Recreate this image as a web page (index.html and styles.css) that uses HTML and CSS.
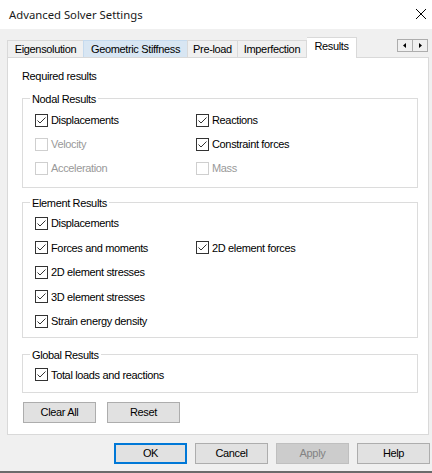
FILE: index.html
```html
<!DOCTYPE html>
<html>
<head>
<meta charset="utf-8">
<link rel="stylesheet" href="styles.css">
</head>
<body>
<div class="window">
  <div class="titlebar">
    <span class="title">Advanced Solver Settings</span>
    <svg class="close" width="12" height="12" viewBox="0 0 12 12"><path d="M1 1 L11 11 M11 1 L1 11" stroke="#000" stroke-width="1" fill="none"/></svg>
  </div>
  <div class="body">
    <div class="tabstrip">
      <div class="tab t1">Eigensolution</div>
      <div class="tab t2 hover">Geometric Stiffness</div>
      <div class="tab t3">Pre-load</div>
      <div class="tab t4">Imperfection</div>
      <div class="tab t5 active">Results</div>
      <div class="scroller">
        <div class="sbtn"><svg width="14" height="11" viewBox="0 0 14 11"><path d="M8 3 L5 5.5 L8 8 Z" fill="#000"/></svg></div>
        <div class="sbtn"><svg width="14" height="11" viewBox="0 0 14 11"><path d="M6 3 L9 5.5 L6 8 Z" fill="#000"/></svg></div>
      </div>
    </div>
    <div class="panel">
      <div class="req">Required results</div>

      <div class="group g-nodal">
        <div class="gtitle">Nodal Results</div>
        <div class="grid">
          <label class="cb"><span class="box"><svg viewBox="0 0 11 11"><path d="M1.5 5.5 L4 8 L9.5 2.5"/></svg></span>Displacements</label>
          <label class="cb"><span class="box"><svg viewBox="0 0 11 11"><path d="M1.5 5.5 L4 8 L9.5 2.5"/></svg></span>Reactions</label>
          <label class="cb dis"><span class="box"></span>Velocity</label>
          <label class="cb"><span class="box"><svg viewBox="0 0 11 11"><path d="M1.5 5.5 L4 8 L9.5 2.5"/></svg></span>Constraint forces</label>
          <label class="cb dis"><span class="box"></span>Acceleration</label>
          <label class="cb dis"><span class="box"></span>Mass</label>
        </div>
      </div>

      <div class="group g-elem">
        <div class="gtitle">Element Results</div>
        <div class="grid elem">
          <label class="cb"><span class="box"><svg viewBox="0 0 11 11"><path d="M1.5 5.5 L4 8 L9.5 2.5"/></svg></span>Displacements</label>
          <span></span>
          <label class="cb"><span class="box"><svg viewBox="0 0 11 11"><path d="M1.5 5.5 L4 8 L9.5 2.5"/></svg></span>Forces and moments</label>
          <label class="cb"><span class="box"><svg viewBox="0 0 11 11"><path d="M1.5 5.5 L4 8 L9.5 2.5"/></svg></span>2D element forces</label>
          <label class="cb"><span class="box"><svg viewBox="0 0 11 11"><path d="M1.5 5.5 L4 8 L9.5 2.5"/></svg></span>2D element stresses</label>
          <span></span>
          <label class="cb"><span class="box"><svg viewBox="0 0 11 11"><path d="M1.5 5.5 L4 8 L9.5 2.5"/></svg></span>3D element stresses</label>
          <span></span>
          <label class="cb"><span class="box"><svg viewBox="0 0 11 11"><path d="M1.5 5.5 L4 8 L9.5 2.5"/></svg></span>Strain energy density</label>
          <span></span>
        </div>
      </div>

      <div class="group g-global">
        <div class="gtitle">Global Results</div>
        <div class="grid">
          <label class="cb"><span class="box"><svg viewBox="0 0 11 11"><path d="M1.5 5.5 L4 8 L9.5 2.5"/></svg></span>Total loads and reactions</label>
        </div>
      </div>

      <div class="panelbtns">
        <div class="btn">Clear All</div>
        <div class="btn">Reset</div>
      </div>
    </div>
    <div class="footer">
      <div class="btn default">OK</div>
      <div class="btn">Cancel</div>
      <div class="btn disabled">Apply</div>
      <div class="btn">Help</div>
    </div>
  </div>
</div>
</body>
</html>
```
FILE: styles.css
```css
html, body {
  margin: 0;
  padding: 0;
}
body {
  width: 432px;
  height: 473px;
  overflow: hidden;
  background: #f0f0f0;
  font-family: "Liberation Sans", Arial, sans-serif;
  font-size: 11px;
  letter-spacing: -0.35px;
  color: #000;
}
.window {
  width: 432px;
  height: 471px;
  border-bottom: 2px solid #6b6b6b;
  background: #f0f0f0;
}
.titlebar {
  height: 29px;
  background: #fff;
  display: flex;
  align-items: center;
  justify-content: space-between;
  padding: 0 5px 0 9px;
}
.title {
  font-family: "Noto Sans", "Liberation Sans", sans-serif;
  font-size: 11.3px;
  letter-spacing: 0;
  margin-top: -1px;
  color: #1a1a1a;
}
.close {
  margin-top: -2px;
}
.body {
  padding: 7px 0 0 7px;
}
.tabstrip {
  display: flex;
  align-items: flex-end;
  height: 21px;
  width: 422px;
}
.tab {
  height: 16px;
  line-height: 16px;
  border: 1px solid #d9d9d9;
  border-bottom: none;
  border-right: none;
  background: #f0f0f0;
  text-align: center;
  box-sizing: content-box;
}
.tab.t1 { width: 75px; }
.tab.t2 { width: 103px; }
.tab.t3 { width: 49px; }
.tab.t4 { width: 68px; border-right: 1px solid #d9d9d9; }
.tab.hover {
  background: #d8e6f3;
  border-color: #c5daee;
}
.tab.active {
  height: 20px;
  line-height: 17px;
  width: 49px;
  background: #fff;
  border-right: 1px solid #d9d9d9;
  border-left: none;
  margin-bottom: -1px;
  position: relative;
  z-index: 1;
}
.scroller {
  margin-left: auto;
  align-self: flex-start;
  margin-top: 3px;
  display: flex;
  margin-right: 1px;
}
.sbtn {
  width: 14px;
  height: 11px;
  border: 1px solid #adadad;
  background: #f0f0f0;
  display: flex;
}
.sbtn + .sbtn {
  border-left: none;
}
.panel {
  background: #fff;
  border: 1px solid #d9d9d9;
  padding: 0 0 0 14px;
  box-sizing: border-box;
  width: 422px;
  height: 378px;
}
.req {
  margin-top: 12px;
  height: 13px;
  line-height: 13px;
}
.group {
  width: 396px;
  box-sizing: border-box;
  border: 1px solid #dcdcdc;
  padding: 0 0 0 12px;
}
.gtitle {
  display: table;
  margin: -6px 0 0 -5px;
  padding: 0 2px;
  background: #fff;
  height: 13px;
  line-height: 13px;
}
.g-nodal {
  margin-top: 15px;
  padding-bottom: 7px;
}
.g-elem {
  margin-top: 14px;
  padding-bottom: 3px;
}
.g-global {
  margin-top: 16px;
  padding-bottom: 5px;
}
.grid {
  display: grid;
  grid-template-columns: 161px 1fr;
  grid-auto-rows: 24px;
  margin-top: 2px;
}
.grid.elem {
  grid-auto-rows: 24.5px;
  margin-top: 1px;
}
.g-global .grid {
  margin-top: 1px;
}
.cb {
  display: flex;
  align-items: center;
  white-space: nowrap;
}
.box {
  width: 11px;
  height: 11px;
  border: 1px solid #333;
  background: #fff;
  margin-right: 3px;
  flex: none;
  display: flex;
}
.box svg {
  width: 11px;
  height: 11px;
}
.box svg path {
  fill: none;
  stroke: #333;
  stroke-width: 1;
}
.cb.dis {
  color: #999;
}
.cb.dis .box {
  border-color: #cfcfcf;
}
.panelbtns {
  display: flex;
  gap: 11px;
  margin-top: 9px;
  margin-left: 1px;
}
.btn {
  width: 71px;
  height: 19px;
  border: 1px solid #adadad;
  background: #e1e1e1;
  text-align: center;
  line-height: 19px;
}
.footer {
  display: flex;
  gap: 8px;
  margin-top: 8px;
  margin-left: 107px;
}
.btn.default {
  border: 2px solid #0078d7;
  width: 69px;
  height: 17px;
  line-height: 17px;
}
.btn.disabled {
  background: #cccccc;
  border-color: #bfbfbf;
  color: #838383;
}
```
